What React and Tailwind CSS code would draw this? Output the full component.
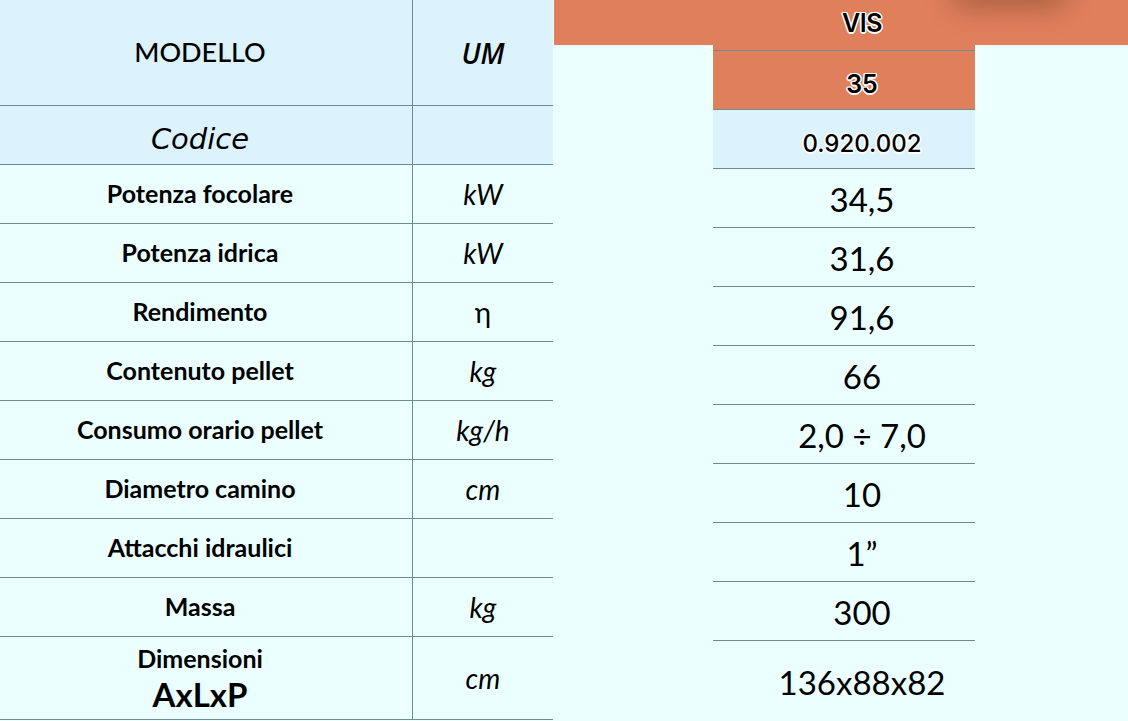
import React from 'react';

const rows = [
    { label: 'Potenza focolare', um: 'kW', value: '34,5' },
    { label: 'Potenza idrica', um: 'kW', value: '31,6' },
    { label: 'Rendimento', um: 'η', value: '91,6', plain: true },
    { label: 'Contenuto pellet', um: 'kg', value: '66' },
    { label: 'Consumo orario pellet', um: 'kg/h', value: '2,0 ÷ 7,0' },
    { label: 'Diametro camino', um: 'cm', value: '10' },
    { label: 'Attacchi idraulici', um: '', value: '1”' },
    { label: 'Massa', um: 'kg', value: '300' },
];

const outline = '[text-shadow:1.5px_0_0_#fff,-1.5px_0_0_#fff,0_1.5px_0_#fff,0_-1.5px_0_#fff,1px_1px_0_#fff,-1px_-1px_0_#fff,1px_-1px_0_#fff,-1px_1px_0_#fff]';

const App = () => {
    return (
        <div className="relative w-[1128px] h-[721px] overflow-hidden bg-[#ebffff] flex font-['Lato',sans-serif] text-black">
            {/* Left: labels + UM */}
            <div className="w-[553px] flex flex-col shrink-0">
                <div className="h-[106px] flex border-b border-[#6d8b93] bg-[#dcf3fe]">
                    <div className="w-[413px] border-r border-[#6d8b93] flex items-center justify-center pr-[12px] text-[27px] font-medium">
                        MODELLO
                    </div>
                    <div className="flex-1 flex items-center justify-center text-[28px] font-semibold italic font-['Open_Sans',sans-serif]">UM</div>
                </div>
                <div className="h-[59px] flex border-b border-[#6d8b93] bg-[#dcf3fe]">
                    <div className="w-[413px] border-r border-[#6d8b93] flex items-center justify-center pr-[12px] pt-[10px] text-[29px] italic font-['DejaVu_Sans',sans-serif]">
                        Codice
                    </div>
                    <div className="flex-1" />
                </div>
                {rows.map((r) => (
                    <div key={r.label} className="h-[59px] flex border-b border-[#6d8b93]">
                        <div className="w-[413px] border-r border-[#6d8b93] flex items-center justify-center pr-[12px] pb-[1px] text-[25px] font-bold">
                            {r.label}
                        </div>
                        <div className={`flex-1 flex items-center justify-center pb-[1px] text-[28px] ${r.plain ? '' : 'italic'}`}>
                            {r.um}
                        </div>
                    </div>
                ))}
                <div className="h-[83px] flex border-b border-[#6d8b93]">
                    <div className="w-[413px] border-r border-[#6d8b93] flex flex-col items-center justify-center pr-[12px] pt-[1px] font-bold leading-none">
                        <span className="text-[25px]">Dimensioni</span>
                        <span className="text-[33px] mt-[7px]">AxLxP</span>
                    </div>
                    <div className="flex-1 flex items-center justify-center text-[28px] italic">cm</div>
                </div>
            </div>

            {/* Right: model column */}
            <div className="flex-1 flex flex-col ml-[1px]">
                <div className="h-[46px] bg-[#e07f5c] flex">
                    <div className="ml-[159px] w-[262px] pl-[36px] flex items-center justify-center pt-[2px]">
                        <span className={`font-['Inter',sans-serif] text-[25px] font-semibold tracking-[-0.5px] ${outline}`}>VIS</span>
                    </div>
                </div>
                <div className="ml-[159px] w-[262px] flex flex-col">
                    <div className="h-[6px] bg-[#e07f5c] border-b border-[#6d8b93]" />
                    <div className="h-[59px] bg-[#e07f5c] border-b border-[#6d8b93] flex items-center justify-center pl-[36px] pt-[10px]">
                        <span className={`font-['Inter',sans-serif] text-[25px] font-semibold ${outline}`}>35</span>
                    </div>
                    <div className="h-[59px] bg-[#dcf3fe] border-b border-[#6d8b93] flex items-center justify-center pl-[36px] pt-[9px]">
                        <span className={`font-['Inter',sans-serif] text-[24px] font-medium ${outline}`}>0.920.002</span>
                    </div>
                    {rows.map((r) => (
                        <div key={r.label} className="h-[59px] border-b border-[#6d8b93] flex items-center justify-center pl-[36px] pt-[3px] text-[33px]">
                            {r.value}
                        </div>
                    ))}
                    <div className="h-[80px] flex items-center justify-center pl-[36px] pt-[4px] text-[33px]">136x88x82</div>
                </div>
            </div>

            {/* soft shadow at top */}
            <div className="absolute left-[950px] top-[-28px] w-[120px] h-[36px] rounded-full bg-[#6a3a22] opacity-45 blur-[14px]" />
        </div>
    );
};

export default App;
